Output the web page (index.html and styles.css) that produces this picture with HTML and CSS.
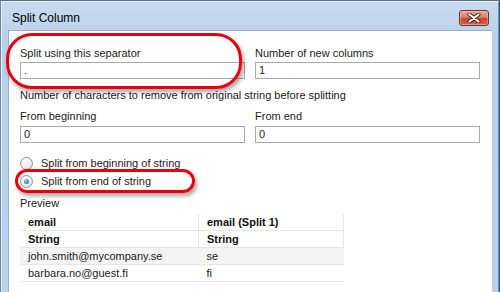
FILE: index.html
```html
<!DOCTYPE html>
<html>
<head>
<meta charset="utf-8">
<link rel="stylesheet" href="styles.css">
</head>
<body>
<div class="window">
  <div class="titlebar">
    <span class="title">Split Column</span>
    <div class="close">
      <svg width="14" height="10" viewBox="0 0 14 10">
        <path d="M2.5 1.5 L11.5 8.5 M11.5 1.5 L2.5 8.5" stroke="#4a1a14" stroke-width="4" stroke-linecap="round"/>
        <path d="M2.5 1.5 L11.5 8.5 M11.5 1.5 L2.5 8.5" stroke="#ffffff" stroke-width="2.2" stroke-linecap="round"/>
      </svg>
    </div>
  </div>
  <div class="client">
    <div class="pair">
      <div class="field">
        <div class="label">Split using this separator</div>
        <div class="input">.</div>
      </div>
      <div class="field">
        <div class="label">Number of new columns</div>
        <div class="input">1</div>
      </div>
    </div>
    <div class="note">Number of characters to remove from original string before splitting</div>
    <div class="pair second">
      <div class="field">
        <div class="label">From beginning</div>
        <div class="input">0</div>
      </div>
      <div class="field">
        <div class="label">From end</div>
        <div class="input">0</div>
      </div>
    </div>
    <div class="radios">
      <div class="radio-row"><span class="radio"></span><span>Split from beginning of string</span></div>
      <div class="radio-row"><span class="radio checked"></span><span>Split from end of string</span></div>
    </div>
    <div class="preview-label">Preview</div>
    <table class="preview">
      <tr class="head"><th class="c1">email</th><th class="c2">email (Split 1)</th></tr>
      <tr class="head"><th class="c1">String</th><th class="c2">String</th></tr>
      <tr class="odd"><td>john.smith@mycompany.se</td><td>se</td></tr>
      <tr><td>barbara.no@guest.fi</td><td>fi</td></tr>
    </table>
    <div class="highlight hl-top"></div>
    <div class="highlight hl-radio"></div>
  </div>
</div>
</body>
</html>
```
FILE: styles.css
```css
html, body {
  margin: 0;
  padding: 0;
  width: 500px;
  height: 292px;
  overflow: hidden;
}
body {
  font-family: "Liberation Sans", Arial, sans-serif;
  font-size: 11px;
  color: #1b1b1b;
  background: #ffffff;
}
.window {
  box-sizing: border-box;
  width: 500px;
  height: 292px;
  background: linear-gradient(to bottom, #c9dbef 0px, #bad0e9 40px, #b9d1ea 100%);
  border-top: 1px solid #5d6f86;
  border-left: 1px solid #6e86a3;
  border-right: 1px solid #3d4f66;
  box-shadow: inset 1px 1px 0 #e6eef8, inset -1px 0 0 #4aa2df;
  display: flex;
  flex-direction: column;
  overflow: hidden;
}
.titlebar {
  height: 29px;
  display: flex;
  align-items: flex-start;
  justify-content: space-between;
  padding: 0 10px 0 11px;
  flex: none;
}
.title {
  font-size: 12px;
  color: #000;
  margin-top: 10px;
  line-height: 14px;
}
.close {
  margin-top: 9px;
  width: 28px;
  height: 14px;
  border: 1px solid #70332b;
  border-radius: 3px;
  background: linear-gradient(to bottom, #e9a99c 0%, #d8806e 45%, #c5432e 55%, #cf6a52 100%);
  box-shadow: inset 0 0 0 1px rgba(255,200,190,0.45);
  display: flex;
  align-items: center;
  justify-content: center;
}
.client {
  position: relative;
  flex: 1;
  margin: 0 7px 0 7px;
  background: #ffffff;
  border-top: 1px solid #98aec8;
  border-left: 1px solid #98aec8;
  padding: 16px 12px 0 11px;
}
.pair {
  display: grid;
  grid-template-columns: 225px 225px;
  column-gap: 10px;
}
.field {
  display: flex;
  flex-direction: column;
  gap: 2px;
}
.second .field {
  gap: 3px;
}
.label {
  line-height: 13px;
}
.input {
  box-sizing: border-box;
  height: 17px;
  border: 1px solid #a9a9a9;
  padding: 0 3px;
  line-height: 15px;
  color: #1b1b2e;
}
.note {
  margin-top: 10px;
  line-height: 13px;
}
.second {
  margin-top: 8px;
}
.radios {
  margin-top: 11px;
  display: flex;
  flex-direction: column;
}
.radio-row {
  height: 18px;
  display: flex;
  align-items: center;
  gap: 8px;
}
.radio {
  box-sizing: border-box;
  width: 13px;
  height: 13px;
  border-radius: 50%;
  border: 1px solid #8e8f8f;
  background: radial-gradient(circle at 40% 35%, #ffffff 0%, #f2f2f2 45%, #d6d6d6 100%);
  display: flex;
  align-items: center;
  justify-content: center;
}
.radio.checked::after {
  content: "";
  width: 5px;
  height: 5px;
  border-radius: 50%;
  background: radial-gradient(circle at 40% 35%, #8fd0f7 0%, #2c87d2 60%, #1a5d9c 100%);
}
.preview-label {
  margin-top: 7px;
  line-height: 13px;
}
.preview {
  margin-top: 4px;
  border-collapse: collapse;
  width: 324px;
  table-layout: fixed;
}
.preview th, .preview td {
  height: 16px;
  padding: 0 0 0 8px;
  text-align: left;
  line-height: 16px;
  border-bottom: 1px solid #e6e6e6;
  font-size: 11px;
  white-space: nowrap;
}
.preview th {
  font-weight: bold;
  color: #111;
  border-right: 1px solid #e6e6e6;
}
.preview .c1 {
  width: 170px;
}
.preview tr.odd td {
  background: #f4f4f4;
}
.highlight {
  position: absolute;
  box-sizing: border-box;
  border: 3px solid #e8000c;
  box-shadow: 2px 3px 4px rgba(0, 0, 0, 0.35);
}
.hl-top {
  left: -3px;
  top: 2px;
  width: 236px;
  height: 56px;
  border-radius: 26px;
}
.hl-radio {
  left: 6px;
  top: 138px;
  width: 180px;
  height: 24px;
  border-radius: 12px;
}
```
